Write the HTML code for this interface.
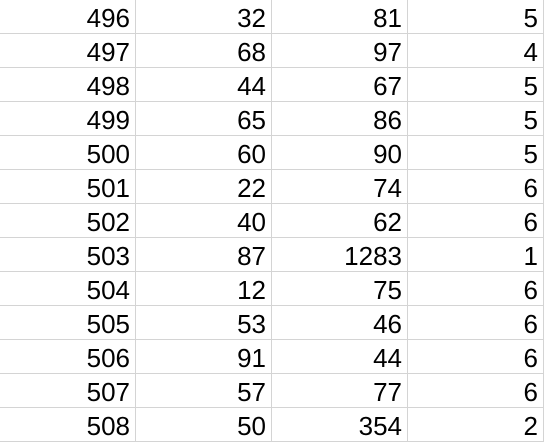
<html><head><style>
body{margin:0;background:#fff;overflow:hidden}
table{border-collapse:collapse;position:absolute;left:-1px;top:-1px;table-layout:fixed}
td{width:136px;height:34px;border:1px solid #d4d4d4;padding:2px 5px 0 0;text-align:right;font:26px "Liberation Sans",Arial,sans-serif;color:#000;vertical-align:middle;box-sizing:border-box;line-height:30px}
</style></head><body>
<table>
<tr><td>496</td><td>32</td><td>81</td><td>5</td></tr>
<tr><td>497</td><td>68</td><td>97</td><td>4</td></tr>
<tr><td>498</td><td>44</td><td>67</td><td>5</td></tr>
<tr><td>499</td><td>65</td><td>86</td><td>5</td></tr>
<tr><td>500</td><td>60</td><td>90</td><td>5</td></tr>
<tr><td>501</td><td>22</td><td>74</td><td>6</td></tr>
<tr><td>502</td><td>40</td><td>62</td><td>6</td></tr>
<tr><td>503</td><td>87</td><td>1283</td><td>1</td></tr>
<tr><td>504</td><td>12</td><td>75</td><td>6</td></tr>
<tr><td>505</td><td>53</td><td>46</td><td>6</td></tr>
<tr><td>506</td><td>91</td><td>44</td><td>6</td></tr>
<tr><td>507</td><td>57</td><td>77</td><td>6</td></tr>
<tr><td>508</td><td>50</td><td>354</td><td>2</td></tr>
</table>
</body></html>
